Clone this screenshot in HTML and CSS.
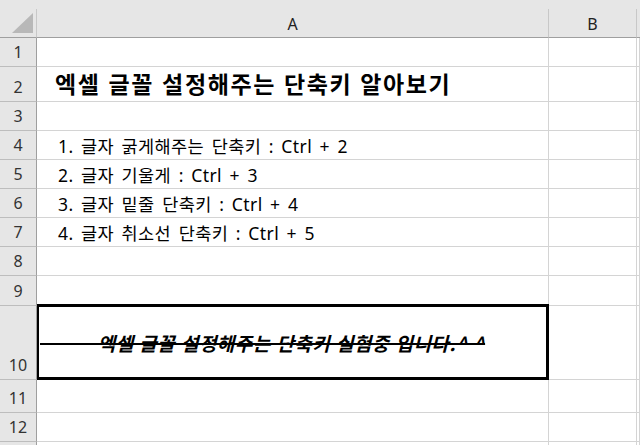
FILE: index.html
```html
<!DOCTYPE html>
<html lang="ko">
<head>
<meta charset="utf-8">
<title>엑셀 글꼴 설정해주는 단축키</title>
<link rel="stylesheet" href="styles.css">
</head>
<body>
<div class="app">
  <div class="topstrip"></div>
  <div class="sheet">
    <div class="corner"><svg class="tri" width="36" height="28" viewBox="0 0 36 28"><polygon points="12,24 33,24 33,4" fill="#b8b8b8"/></svg></div>
    <div class="colhead">A</div>
    <div class="colhead">B</div>
    <div class="colhead last"></div>

    <div class="rowhead">1</div><div class="cell"></div><div class="cell"></div><div class="cell"></div>
    <div class="rowhead">2</div><div class="cell title">엑셀 글꼴 설정해주는 단축키 알아보기</div><div class="cell"></div><div class="cell"></div>
    <div class="rowhead">3</div><div class="cell"></div><div class="cell"></div><div class="cell"></div>
    <div class="rowhead">4</div><div class="cell item">1. 글자 굵게해주는 단축키 : Ctrl + 2</div><div class="cell"></div><div class="cell"></div>
    <div class="rowhead">5</div><div class="cell item">2. 글자 기울게 : Ctrl + 3</div><div class="cell"></div><div class="cell"></div>
    <div class="rowhead">6</div><div class="cell item">3. 글자 밑줄 단축키 : Ctrl + 4</div><div class="cell"></div><div class="cell"></div>
    <div class="rowhead">7</div><div class="cell item">4. 글자 취소선 단축키 : Ctrl + 5</div><div class="cell"></div><div class="cell"></div>
    <div class="rowhead">8</div><div class="cell"></div><div class="cell"></div><div class="cell"></div>
    <div class="rowhead">9</div><div class="cell"></div><div class="cell"></div><div class="cell"></div>
    <div class="rowhead">10</div><div class="cell boxed"><span class="strike">          엑셀 글꼴 설정해주는 단축키 실험중 입니다.^ ^</span></div><div class="cell"></div><div class="cell"></div>
    <div class="rowhead">11</div><div class="cell"></div><div class="cell"></div><div class="cell"></div>
    <div class="rowhead">12</div><div class="cell"></div><div class="cell"></div><div class="cell"></div>
    <div class="rowhead"></div><div class="cell"></div><div class="cell"></div><div class="cell"></div>
  </div>
</div>
</body>
</html>
```

FILE: styles.css
```css
* { box-sizing: border-box; }
html, body {
  margin: 0;
  padding: 0;
  background: #ffffff;
  overflow: hidden;
}
.app {
  width: 640px;
  height: 445px;
  overflow: hidden;
  font-family: "Noto Sans", "Noto Sans CJK KR", sans-serif;
  color: #000;
}
.topstrip {
  height: 9px;
  background: #e6e6e6;
}
.sheet {
  display: grid;
  grid-template-columns: 37px 512px 88px 1fr;
  grid-template-rows: 29px 29px 35px 29px 29px 29px 29px 29px 29px 30px 74px 33px 29px 29px;
}
.corner {
  background: #e6e6e6;
  border-right: 1px solid #c8c8c8;
  border-bottom: 1px solid #9f9f9f;
  position: relative;
}
.tri { display: block; }
.colhead {
  background: #e6e6e6;
  border-right: 1px solid #c8c8c8;
  border-bottom: 1px solid #9f9f9f;
  display: flex;
  align-items: center;
  justify-content: center;
  font-size: 16px;
  color: #222;
  padding-top: 1px;
}
.colhead.last { border-right: none; }
.rowhead {
  background: #e6e6e6;
  border-right: 1px solid #9f9f9f;
  border-bottom: 1px solid #bdbdbd;
  display: flex;
  align-items: flex-end;
  justify-content: center;
  font-size: 16px;
  line-height: 20px;
  padding-bottom: 4px;
  color: #333;
}
.cell {
  border-right: 1px solid #d4d4d4;
  border-bottom: 1px solid #d4d4d4;
  display: flex;
  align-items: center;
  white-space: nowrap;
  overflow: visible;
  min-width: 0;
}
.title {
  font-family: "Noto Sans CJK KR", "Noto Sans", sans-serif;
  font-weight: 700;
  font-size: 23px;
  letter-spacing: 1.6px;
  padding-left: 18px;
  padding-bottom: 3px;
}
.item {
  font-family: "Noto Sans", "Noto Sans CJK KR", sans-serif;
  font-size: 17.5px;
  letter-spacing: 0.4px;
  word-spacing: 2.6px;
  padding-left: 21px;
}
.boxed {
  position: relative;
  padding-left: 3px;
}
.boxed::after {
  content: "";
  position: absolute;
  top: -2px;
  left: 0;
  right: -1px;
  bottom: -1px;
  border: 3px solid #000;
  border-left-width: 2px;
  z-index: 2;
  pointer-events: none;
}
.strike {
  white-space: pre;
  font-family: "Noto Sans CJK KR", "Noto Sans", sans-serif;
  font-weight: 700;
  font-style: italic;
  font-size: 19px;
  letter-spacing: 0.45px;
  text-decoration: line-through;
  text-decoration-thickness: 1.5px;
}
```
